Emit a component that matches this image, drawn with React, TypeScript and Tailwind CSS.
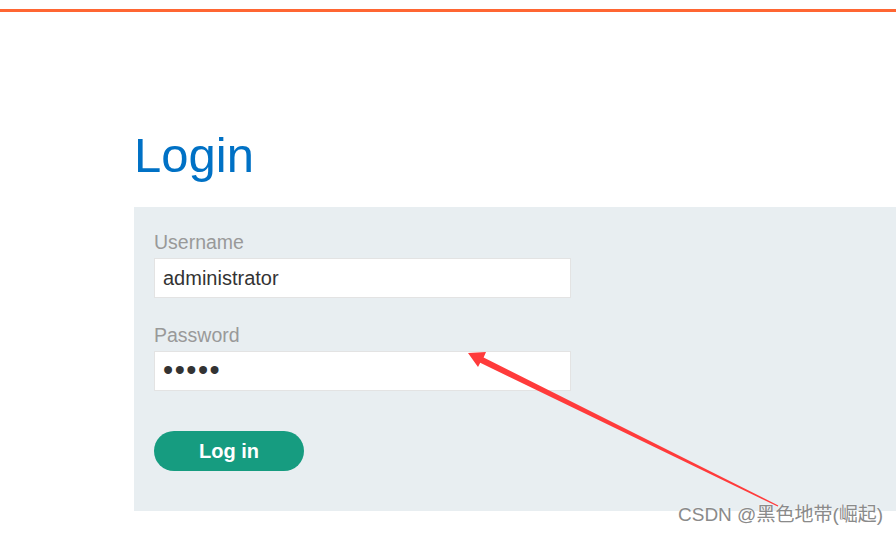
import React from 'react'

const Arrow = () => (
  <svg
    className="pointer-events-none absolute left-0 top-0"
    width="896"
    height="534"
    viewBox="0 0 896 534"
  >
    <polygon
      points="468,353 486,352 483.6,357.4 778.3,505.5 777.7,506.5 480.2,362.8 478,367"
      fill="#ff3b3b"
    />
  </svg>
)

const App = () => {
  return (
    <div className="relative h-[534px] w-[896px] overflow-hidden bg-white font-['Liberation_Sans',Arial,sans-serif]">
      {/* top accent */}
      <div className="mt-[9px] h-[3px] bg-[#ff6633]" />

      <div className="pl-[134px]">
        <h1 className="mt-[119px] text-[49px] leading-[48px] font-normal text-[#0071c5]">Login</h1>

        {/* login form */}
        <form
          className="mt-[28px] h-[304px] bg-[#e8eef1] px-5 pt-6"
          onSubmit={(e) => e.preventDefault()}
        >
          <label className="block text-[19.5px] leading-[23px] text-[#999999]">Username</label>
          <input
            type="text"
            readOnly
            value="administrator"
            className="mt-1 block h-10 w-[417px] border border-[#e3e3e3] bg-white pl-2 text-[20px] text-[#333333] outline-none"
          />

          <label className="mt-[26px] block text-[19.5px] leading-[23px] text-[#999999]">Password</label>
          <input
            type="password"
            readOnly
            value="peter"
            className="mt-1 block h-10 w-[417px] border border-[#e3e3e3] bg-white pl-2 text-[29px] tracking-[1.5px] text-[#333333] outline-none"
          />

          <button
            type="submit"
            className="mt-10 block h-10 w-[150px] rounded-full bg-[#169c80] text-[20px] font-bold text-white"
          >
            Log in
          </button>
        </form>
      </div>

      <Arrow />

      {/* watermark */}
      <div className="absolute left-[678px] top-[505px] text-[19px] leading-[19px] text-[#8a8a8a] [text-shadow:0_0_2px_#ffffff] font-['Liberation_Sans','Noto_Sans_CJK_SC',sans-serif]">
        CSDN @黑色地带(崛起)
      </div>
    </div>
  )
}

export default App
